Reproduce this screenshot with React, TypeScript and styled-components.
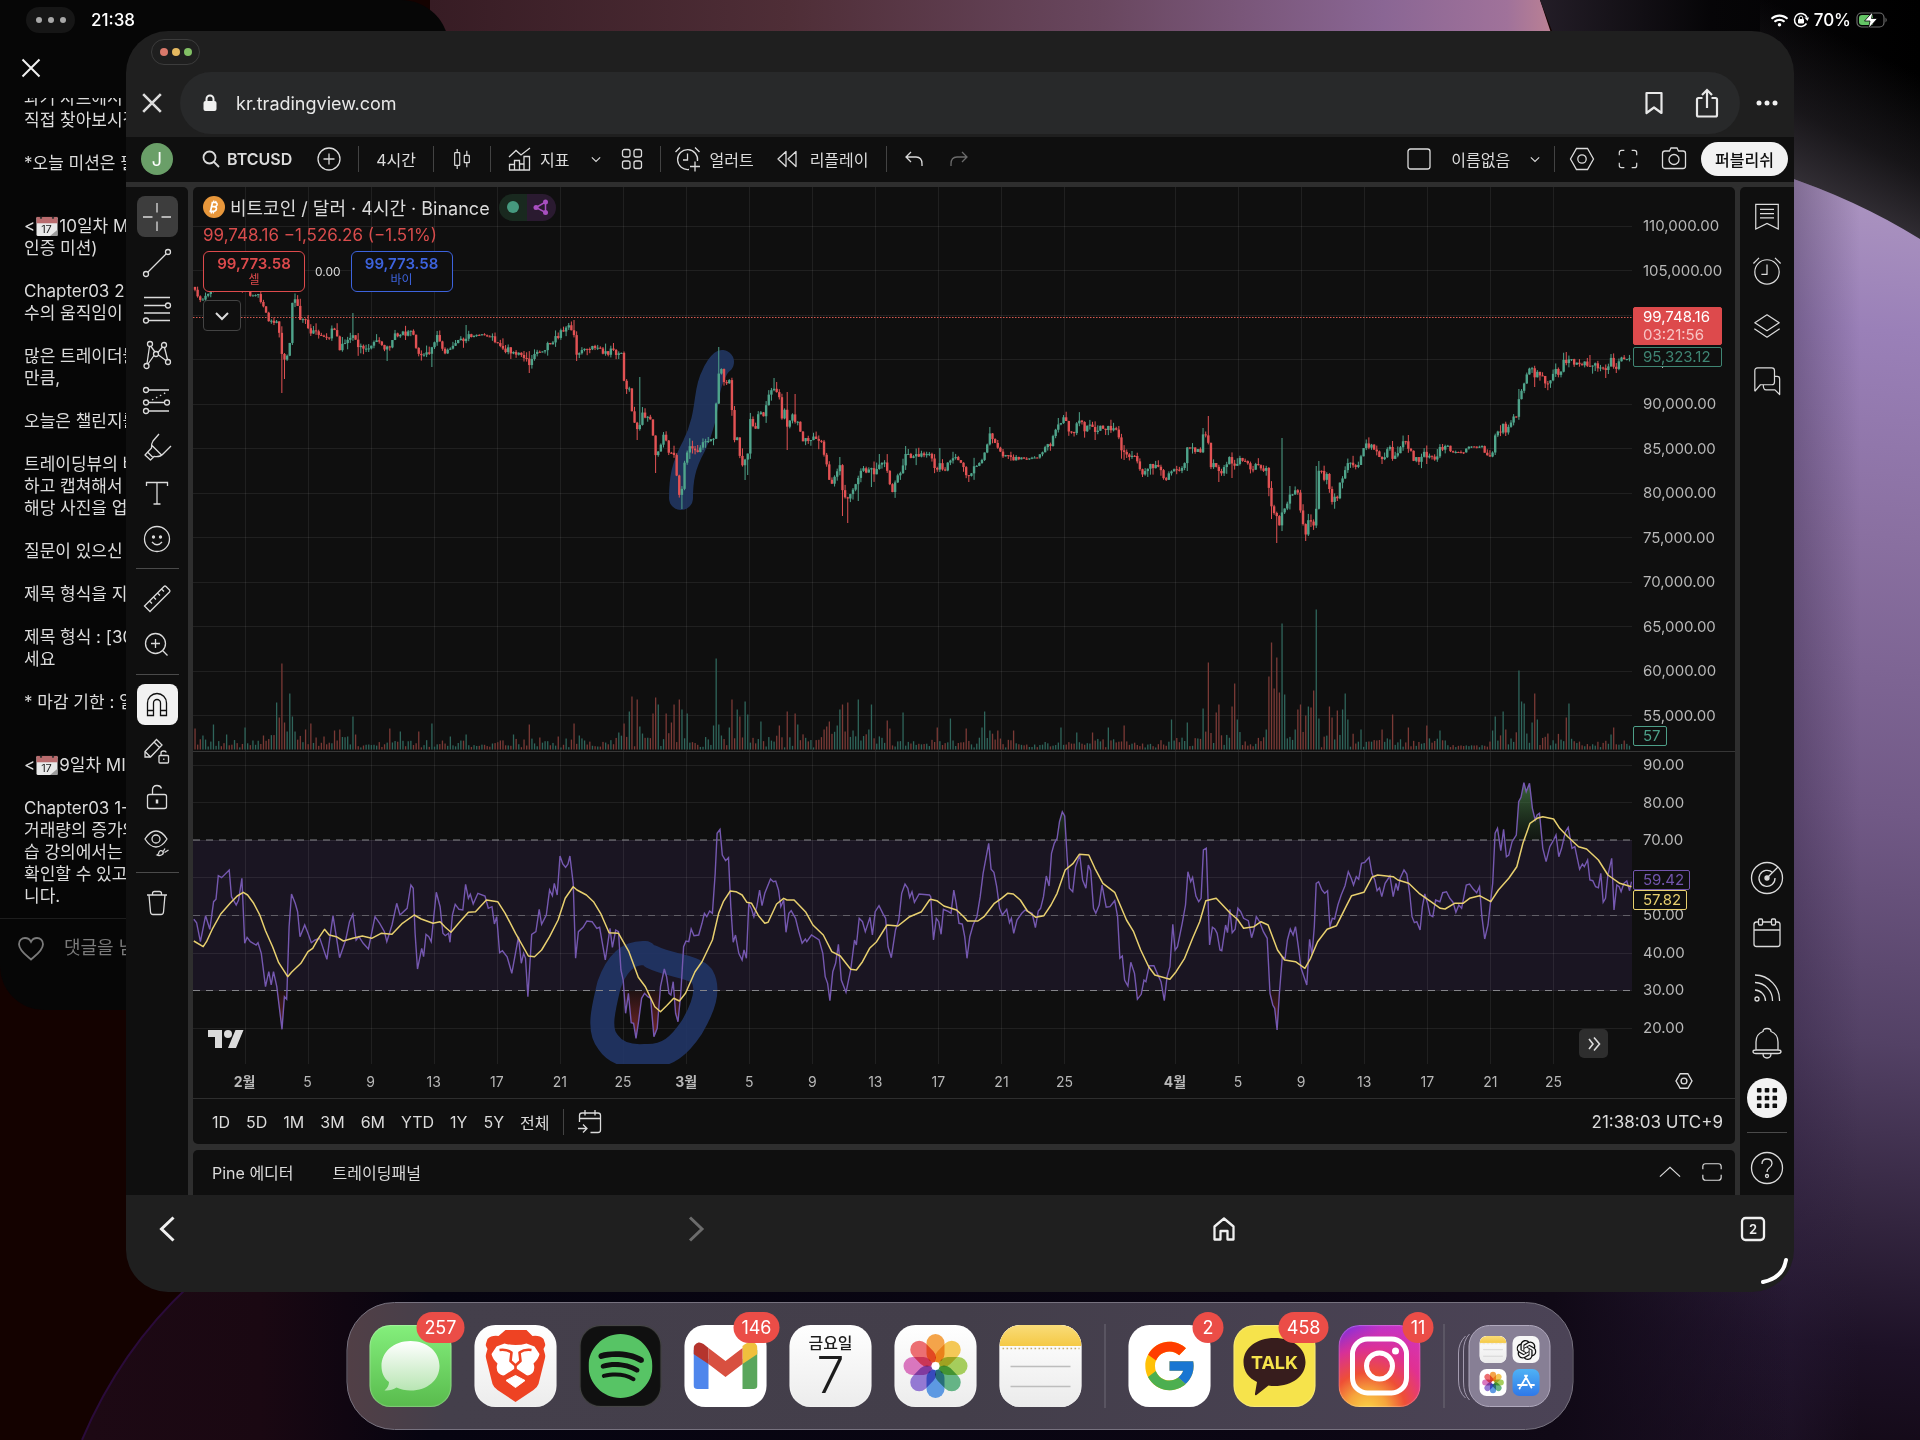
import React from "react";
import styled, { createGlobalStyle } from "styled-components";
import { SiSpotify, SiOpenai } from "react-icons/si";
import { FcGoogle } from "react-icons/fc";
import { FaWifi } from "react-icons/fa";

/* ------------------------------------------------------------------ */
/* Base                                                                */
/* ------------------------------------------------------------------ */

const GlobalStyle = createGlobalStyle`
  *, *::before, *::after { box-sizing: border-box; }
  body {
    margin: 0;
    background: #050308;
    color: #dbdbdb;
    font-family: Inter, "Noto Sans CJK KR", "Noto Sans", sans-serif;
    font-size: 16px;
  }
  button {
    margin: 0;
    padding: 0;
    border: 0;
    background: none;
    color: inherit;
    font: inherit;
    cursor: pointer;
  }
  p, h1, h2 { margin: 0; font-weight: 400; }
`;

const Desktop = styled.div`
  position: relative;
  height: 100vh;
  min-height: 1100px;
  overflow: hidden;
`;

const WallpaperSvg = styled.svg`
  position: absolute;
  inset: 0;
  width: 100%;
  height: 100%;
`;

const Glyph = styled.svg<{ $size?: number; $stroke?: number }>`
  display: block;
  flex: none;
  width: ${(p) => p.$size ?? 28}px;
  height: ${(p) => p.$size ?? 28}px;
  fill: none;
  stroke: currentColor;
  stroke-width: ${(p) => p.$stroke ?? 1.3};
  overflow: visible;
`;

const Wallpaper = () => (
  <WallpaperSvg viewBox="0 0 1920 1440" preserveAspectRatio="xMidYMid slice" aria-hidden="true">
    <defs>
      <linearGradient id="band" x1="430" x2="1552" y1="0" y2="0" gradientUnits="userSpaceOnUse">
        <stop offset="0" stopColor="#371c24" />
        <stop offset=".32" stopColor="#4f2e37" />
        <stop offset=".6" stopColor="#69475f" />
        <stop offset=".85" stopColor="#8a6694" />
        <stop offset=".96" stopColor="#a0729a" />
        <stop offset="1" stopColor="#bb8194" />
      </linearGradient>
      <linearGradient id="night" x1="1540" x2="1920" y1="0" y2="0" gradientUnits="userSpaceOnUse">
        <stop offset="0" stopColor="#231d27" />
        <stop offset=".45" stopColor="#060507" />
        <stop offset="1" stopColor="#000" />
      </linearGradient>
      <linearGradient id="glow" x1="1890" x2="1813" y1="60" y2="215" gradientUnits="userSpaceOnUse">
        <stop offset="0" stopColor="#3f3a42" stopOpacity="0" />
        <stop offset=".5" stopColor="#3f3a42" stopOpacity=".35" />
        <stop offset="1" stopColor="#3f3a42" stopOpacity=".95" />
      </linearGradient>
      <linearGradient id="lilac" x1="1900" x2="1780" y1="180" y2="1440" gradientUnits="userSpaceOnUse">
        <stop offset="0" stopColor="#ad96c1" />
        <stop offset=".12" stopColor="#9a80b8" />
        <stop offset=".28" stopColor="#8a70a1" />
        <stop offset=".5" stopColor="#715986" />
        <stop offset=".68" stopColor="#534165" />
        <stop offset=".82" stopColor="#33253f" />
        <stop offset=".92" stopColor="#1d1126" />
        <stop offset="1" stopColor="#140a18" />
      </linearGradient>
      <linearGradient id="edge" x1="1790" x2="1860" y1="0" y2="0" gradientUnits="userSpaceOnUse">
        <stop offset="0" stopColor="#2a1c3a" stopOpacity=".35" />
        <stop offset="1" stopColor="#2a1c3a" stopOpacity="0" />
      </linearGradient>
      <linearGradient id="floor" x1="90" x2="1792" y1="0" y2="0" gradientUnits="userSpaceOnUse">
        <stop offset="0" stopColor="#1d0914" />
        <stop offset=".1" stopColor="#1a0812" />
        <stop offset=".2" stopColor="#060410" />
        <stop offset=".7" stopColor="#0b0613" />
        <stop offset=".86" stopColor="#100916" />
        <stop offset="1" stopColor="#140a1a" stopOpacity="0" />
      </linearGradient>
    </defs>
    <rect width="1920" height="1440" fill="#140200" />
    <path d="M430 0H1540L1560 60H430Z" fill="url(#band)" />
    <path d="M1540 0H1920V260H1600L1552 31Z" fill="url(#night)" />
    <path d="M1760 0H1920V260H1760Z" fill="url(#glow)" />
    <path d="M1760 168Q1850 195 1920 239V1440H1400V1200H1760Z" fill="url(#lilac)" />
    <path d="M1400 168H1760Q1850 195 1920 239V1440H1400Z" fill="url(#edge)" />
    <path d="M82 1440Q120 1350 190 1285H1792V1440Z" fill="url(#floor)" />
    <path d="M82 1440Q120 1350 190 1285" fill="none" stroke="#2a0b3a" strokeWidth="2" />
  </WallpaperSvg>
);

/* ------------------------------------------------------------------ */
/* Status bar                                                          */
/* ------------------------------------------------------------------ */

const StatusBar = styled.header`
  position: absolute;
  z-index: 2;
  top: 0;
  left: 0;
  right: 0;
  display: flex;
  align-items: center;
  height: 40px;
  padding: 0 32px 0 26px;
  color: #fff;
  font-size: 17px;
  font-weight: 500;
`;

const DotsPill = styled.button<{ $outlined?: boolean }>`
  display: flex;
  align-items: center;
  justify-content: center;
  gap: ${(p) => (p.$outlined ? 4 : 6)}px;
  width: 49px;
  height: 26px;
  border-radius: 13px;
  background: ${(p) => (p.$outlined ? "transparent" : "#161616")};
  border: ${(p) => (p.$outlined ? "1px solid #3c3c3c" : "0")};
`;

const Dot = styled.span<{ $color: string; $small?: boolean }>`
  width: ${(p) => (p.$small ? 6 : 8)}px;
  height: ${(p) => (p.$small ? 6 : 8)}px;
  border-radius: 50%;
  background: ${(p) => p.$color};
`;

const Clock = styled.time`
  margin-left: 16px;
`;

const StatusIcons = styled.div`
  display: flex;
  align-items: center;
  gap: 5px;
  margin-left: auto;
`;

const Battery = () => (
  <svg width="32" height="18" viewBox="0 0 32 18" aria-label="배터리 충전 중">
    <rect x="1" y="2" width="27" height="14" rx="4.5" fill="none" stroke="#6d6d6d" strokeWidth="1.2" />
    <path d="M6 4H17V14H6Q3 14 3 11V7Q3 4 6 4Z" fill="#64c466" />
    <path d="M29.5 6.5Q32 9 29.5 11.5Z" fill="#6d6d6d" />
    <path d="M17 .5L8.500 10H14L12.500 17.500L21.500 7.500H15.500Z" fill="#fff" stroke="#000" strokeWidth=".8" />
  </svg>
);

/* ------------------------------------------------------------------ */
/* Notes-like app behind the browser                                   */
/* ------------------------------------------------------------------ */

const BackApp = styled.section`
  position: absolute;
  top: 0;
  left: 0;
  display: flex;
  flex-direction: column;
  width: 449px;
  height: 1010px;
  padding-top: 54px;
  border-radius: 0 48px 0 44px;
  background: #060606;
`;

const BackClose = styled.button`
  width: 28px;
  height: 28px;
  margin-left: 17px;
  color: #f0f0f0;
`;

const Article = styled.article`
  display: flex;
  flex: 1;
  flex-direction: column;
  justify-content: flex-end;
  gap: 21px;
  min-height: 0;
  margin-top: 16px;
  padding: 0 24px 11px;
  overflow: hidden;
  color: #dcdcdc;
  font-size: 17px;
  line-height: 22px;
  white-space: pre;
`;

const Block = styled.p<{ $far?: boolean }>`
  margin-top: ${(p) => (p.$far ? 20 : 0)}px;
`;

const CommentBar = styled.footer`
  display: flex;
  align-items: flex-start;
  gap: 19px;
  height: 92px;
  padding: 16px 17px;
  border-top: 1px solid #1d1d1d;
  color: #7a7a7a;
  font-size: 18px;
  line-height: 26px;
`;

const EmojiSvg = styled.svg`
  width: 22px;
  height: 20px;
  margin: 0 1px;
  vertical-align: -4px;
`;

const CalendarEmoji = () => (
  <EmojiSvg viewBox="0 0 22 22" preserveAspectRatio="none" aria-label="달력">
    <rect x=".5" y="1" width="21" height="21" rx="1.500" fill="#e9e9e9" />
    <path d="M.5 1H21.500V8H.5Z" fill="#b96c6e" />
    <circle cx="5" cy="2" r="1.200" fill="#333" />
    <circle cx="17" cy="2" r="1.200" fill="#333" />
    <path d="M21.500 15L14 22H21.500Z" fill="#9b9b9b" />
    <text x="10.500" y="19" fontSize="11" textAnchor="middle" fill="#222" fontFamily="Inter, sans-serif">17</text>
  </EmojiSvg>
);

const NotesApp = () => (
  <BackApp>
    <BackClose aria-label="닫기">
      <Glyph viewBox="0 0 28 28" $stroke={2}><path d="M5.500 5.500L22.500 22.500M22.500 5.500L5.500 22.500" /></Glyph>
    </BackClose>
    <Article>
      <Block>{"과거 차트에서\n직접 찾아보시길"}</Block>
      <Block>{"*오늘 미션은 필"}</Block>
      <Block $far>{"<"}<CalendarEmoji />{"10일차 M\n인증 미션)"}</Block>
      <Block>{"Chapter03 2\n수의 움직임이"}</Block>
      <Block>{"많은 트레이더들\n만큼,"}</Block>
      <Block>{"오늘은 챌린지를"}</Block>
      <Block>{"트레이딩뷰의 바\n하고 캡쳐해서\n해당 사진을 업"}</Block>
      <Block>{"질문이 있으신"}</Block>
      <Block>{"제목 형식을 지"}</Block>
      <Block>{"제목 형식 : [30\n세요"}</Block>
      <Block>{"* 마감 기한 : 일"}</Block>
      <Block $far>{"<"}<CalendarEmoji />{"9일차 MI"}</Block>
      <Block>{"Chapter03 1-\n거래량의 증가와\n습 강의에서는\n확인할 수 있고\n니다."}</Block>
    </Article>
    <CommentBar>
      <Glyph viewBox="0 0 28 28" $stroke={1.8}>
        <path d="M14 24.500C10 21 2 15.500 2 9.200C2 5.500 4.800 3 8 3C10.600 3 12.800 4.400 14 6.800C15.200 4.400 17.400 3 20 3C23.200 3 26 5.500 26 9.200C26 15.500 18 21 14 24.500Z" />
      </Glyph>
      <span>댓글을 남</span>
    </CommentBar>
  </BackApp>
);

/* ------------------------------------------------------------------ */
/* Browser window                                                      */
/* ------------------------------------------------------------------ */

const BrowserWindow = styled.main`
  position: absolute;
  z-index: 3;
  top: 31px;
  right: 126px;
  bottom: 148px;
  left: 126px;
  display: flex;
  flex-direction: column;
  overflow: hidden;
  border-radius: 42px;
  background: #1f1f1f;
`;

const TitleBar = styled.div`
  flex: none;
  height: 41px;
  padding: 8px 25px;
`;

const AddressRow = styled.div`
  display: flex;
  flex: none;
  align-items: center;
  gap: 15px;
  height: 65px;
  padding: 0 15px 3px 13px;
`;

const AddressBar = styled.div`
  display: flex;
  flex: 1;
  align-items: center;
  height: 62px;
  padding: 0 19px 0 20px;
  border-radius: 31px;
  background: #28292a;
  color: #e8e8e8;
  font-size: 18px;
`;

const Url = styled.a`
  margin: 0 auto 0 16px;
  color: inherit;
  text-decoration: none;
`;

const IconButton = styled.button<{ $ml?: number; $dim?: boolean }>`
  display: flex;
  flex: none;
  align-items: center;
  justify-content: center;
  margin-left: ${(p) => p.$ml ?? 0}px;
  color: ${(p) => (p.$dim ? "#6c6c6c" : "inherit")};
`;

const Toolbar = styled.div`
  display: flex;
  flex: none;
  align-items: center;
  height: 45px;
  padding: 0 6px 1px 15px;
  background: #0f0f0f;
  white-space: nowrap;
`;

const Avatar = styled.button`
  width: 32px;
  height: 32px;
  border-radius: 50%;
  background: #6a9f68;
  color: #fff;
  font-size: 18px;
`;

const ToolButton = styled.button<{ $ml: number; $gap?: number; $strong?: boolean }>`
  display: flex;
  flex: none;
  align-items: center;
  gap: ${(p) => p.$gap ?? 8}px;
  margin-left: ${(p) => p.$ml}px;
  font-weight: ${(p) => (p.$strong ? 600 : 400)};
`;

const Divider = styled.span<{ $tight?: boolean }>`
  flex: none;
  width: 1px;
  height: 26px;
  margin-left: ${(p) => (p.$tight ? 14 : 17)}px;
  background: #434343;
`;

const RightTools = styled.div`
  display: flex;
  align-items: center;
  margin-left: auto;
`;

const Publish = styled.button`
  height: 34px;
  margin-left: 14px;
  padding: 0 14px;
  border-radius: 17px;
  background: #f2f2f2;
  color: #0f0f0f;
  font-weight: 500;
`;

const Chevron = () => (
  <Glyph viewBox="0 0 12 12" $size={10}><path d="M1 4L6 9L11 4" /></Glyph>
);

const FullscreenGlyph = ({ wide }: { wide?: boolean }) => (
  <Glyph viewBox="0 0 24 24" $size={22}>
    {wide ? (
      <path d="M2 9V6Q2 3 5 3H19Q22 3 22 6V9M2 15V18Q2 21 5 21H19Q22 21 22 18V15" />
    ) : (
      <path d="M2.500 8V5Q2.500 2.500 5 2.500H8M16 2.500H19Q21.500 2.500 21.500 5V8M21.500 16V19Q21.500 21.500 19 21.500H16M8 21.500H5Q2.500 21.500 2.500 19V16" />
    )}
  </Glyph>
);

const HexGlyph = ({ size = 26 }: { size?: number }) => (
  <Glyph viewBox="0 0 26 26" $size={size} $stroke={size < 20 ? 2 : 1.3}>
    <path d="M7.500 2.500H18.500L24.500 13L18.500 23.500H7.500L1.500 13Z" />
    <circle cx="13" cy="13" r="4.200" />
  </Glyph>
);

const ChartToolbar = () => (
  <Toolbar>
    <Avatar>J</Avatar>
    <ToolButton $ml={29} $gap={7} $strong>
      <Glyph viewBox="0 0 18 18" $size={18} $stroke={1.8}><circle cx="7.500" cy="7.500" r="6" /><path d="M12 12L17 17" /></Glyph>
      BTCUSD
    </ToolButton>
    <ToolButton $ml={25} aria-label="비교 추가">
      <Glyph viewBox="0 0 24 24" $size={24}><circle cx="12" cy="12" r="11" /><path d="M12 6.500V17.500M6.500 12H17.500" /></Glyph>
    </ToolButton>
    <Divider />
    <ToolButton $ml={17}>4시간</ToolButton>
    <Divider />
    <ToolButton $ml={17} aria-label="캔들">
      <Glyph viewBox="0 0 22 24" $size={22}>
        <rect x="3" y="5" width="5.500" height="14" rx=".5" /><path d="M5.750 1V5M5.750 19V23" />
        <rect x="13.500" y="8" width="5.500" height="8" rx=".5" /><path d="M16.250 3V8M16.250 16V21" />
      </Glyph>
    </ToolButton>
    <Divider />
    <ToolButton $ml={17}>
      <Glyph viewBox="0 0 24 24" $size={24}>
        <path d="M1 10L8 3.500L13 8L22 1" />
        <path d="M1.500 23V17.500H6.500V23M6.500 23V13.500H11.500V23M11.500 23V17H16V23M16 23V9.500H21.500V23M1 23H22" />
      </Glyph>
      지표
    </ToolButton>
    <ToolButton $ml={22} aria-label="지표 메뉴"><Chevron /></ToolButton>
    <ToolButton $ml={20} aria-label="레이아웃 템플릿">
      <Glyph viewBox="0 0 22 22" $size={22}>
        <rect x="1.500" y="1.500" width="7.500" height="7.500" rx="2" /><rect x="13" y="1.500" width="7.500" height="7.500" rx="2" />
        <rect x="1.500" y="13" width="7.500" height="7.500" rx="2" /><rect x="13" y="13" width="7.500" height="7.500" rx="2" />
      </Glyph>
    </ToolButton>
    <Divider />
    <ToolButton $ml={14}>
      <Glyph viewBox="0 0 26 26" $size={26}>
        <path d="M22.500 15A10 10 0 1 0 14 23.500" /><path d="M12.500 7.500V14H8" /><path d="M.5 6L5 1.500M20 1.500L24.500 6" />
        <path d="M20 15.500V25.500M15 20.500H25" />
      </Glyph>
      얼러트
    </ToolButton>
    <ToolButton $ml={22} $gap={12}>
      <Glyph viewBox="0 0 22 22" $size={22}><path d="M10 3.500V18.500L2 11ZM20 3.500V18.500L12 11Z" strokeLinejoin="round" /></Glyph>
      리플레이
    </ToolButton>
    <Divider />
    <ToolButton $ml={17} aria-label="실행 취소">
      <Glyph viewBox="0 0 20 20" $size={20}><path d="M7 3L2 8L7 13M2 8H12Q18 8 18 15V17" /></Glyph>
    </ToolButton>
    <IconButton $ml={25} $dim aria-label="다시 실행">
      <Glyph viewBox="0 0 20 20" $size={20}><path d="M13 3L18 8L13 13M18 8H8Q2 8 2 15V17" /></Glyph>
    </IconButton>
    <RightTools>
      <IconButton aria-label="레이아웃">
        <Glyph viewBox="0 0 24 24" $size={24}><rect x="1" y="2" width="22" height="20" rx="2.500" /></Glyph>
      </IconButton>
      <ToolButton $ml={20}>이름없음</ToolButton>
      <ToolButton $ml={20} aria-label="레이아웃 메뉴"><Chevron /></ToolButton>
      <Divider $tight />
      <ToolButton $ml={14} aria-label="설정"><HexGlyph /></ToolButton>
      <ToolButton $ml={22} aria-label="전체화면"><FullscreenGlyph /></ToolButton>
      <ToolButton $ml={22} aria-label="스냅샷">
        <Glyph viewBox="0 0 26 26" $size={26}>
          <path d="M8.500 5L10 2H16L17.500 5H22Q24.500 5 24.500 7.500V20Q24.500 22.500 22 22.500H4Q1.500 22.500 1.500 20V7.500Q1.500 5 4 5Z" />
          <circle cx="13" cy="13.500" r="5" />
        </Glyph>
      </ToolButton>
      <Publish>퍼블리쉬</Publish>
    </RightTools>
  </Toolbar>
);

/* ------------------------------------------------------------------ */
/* Workspace                                                           */
/* ------------------------------------------------------------------ */

const Workspace = styled.div`
  display: grid;
  flex: 1;
  grid-template-columns: 62px minmax(0, 1fr) 54px;
  gap: 5px;
  min-height: 0;
  padding-top: 5px;
  background: #2e2e2e;
`;

const DrawTools = styled.nav`
  display: flex;
  flex-direction: column;
  align-items: center;
  gap: 5px;
  padding-top: 9px;
  border-radius: 0 5px 0 0;
  background: #0f0f0f;
`;

const DrawButton = styled.button<{ $look?: "active" | "pressed" }>`
  display: flex;
  flex: none;
  align-items: center;
  justify-content: center;
  width: 41px;
  height: 41px;
  border-radius: 8px;
  background: ${(p) => (p.$look === "active" ? "#3d3d3d" : p.$look === "pressed" ? "#f2f2f2" : "transparent")};
  color: ${(p) => (p.$look === "pressed" ? "#0f0f0f" : "#dbdbdb")};
`;

const RailRule = styled.hr<{ $width: number; $gap: number }>`
  flex: none;
  width: ${(p) => p.$width}px;
  height: 1px;
  margin: ${(p) => p.$gap}px 0;
  border: 0;
  background: #4a4a4a;
`;

type ToolSpec = { label: string; look?: "active" | "pressed"; art: React.ReactNode } | null;

const DRAW_TOOLS: ToolSpec[] = [
  { label: "십자선", look: "active", art: <path d="M14 0V9.500M14 18.500V28M0 14H9.500M18.500 14H28" /> },
  { label: "추세선", art: <><circle cx="3" cy="25" r="2.500" /><circle cx="25" cy="3" r="2.500" /><path d="M5 23L23 5" /></> },
  {
    label: "되돌림",
    art: <><path d="M1 2.500H27M1 10.500H22.500M1 18H27M5.500 25.500H27" /><circle cx="25" cy="10.500" r="2.500" /><circle cx="3" cy="25.500" r="2.500" /></>,
  },
  {
    label: "패턴",
    art: <><circle cx="7" cy="3" r="2.500" /><circle cx="21" cy="4" r="2.500" /><circle cx="13" cy="13" r="2.500" /><circle cx="3.500" cy="25" r="2.500" /><circle cx="25" cy="21" r="2.500" /><path d="M6.500 5.500L4 22.500M8 5.500L12 11M15 11.500L19.500 6M21.500 6.500L24.500 18.500M11 14.500L5 23M15.500 14L23 19.500" /></>,
  },
  {
    label: "예측",
    art: <><circle cx="3" cy="3" r="2.500" /><circle cx="3" cy="15.500" r="2.500" /><circle cx="24" cy="15.500" r="2.500" /><circle cx="3" cy="24" r="2.500" /><path d="M5.500 3H26M5.500 15.500H21.500M5.500 24H26" /><path d="M9 13L24 5" strokeDasharray="1.500 3" /></>,
  },
  {
    label: "브러시",
    art: <path d="M16 1L10 8Q8 11 8.500 15L2 22L7.500 27L11 23.500Q17 24.500 20 21L28 13M9 12.500L18.500 22M5 19.500L10.500 25" strokeLinejoin="round" />,
  },
  { label: "텍스트", art: <path d="M3.500 7V3.500H24.500V7M14 3.500V25M10.500 25H17.500" /> },
  {
    label: "아이콘",
    art: <><circle cx="14" cy="14" r="12.500" /><path d="M9 17Q14 22.500 19 17" /><circle cx="10.500" cy="12" r="1" fill="currentColor" /><circle cx="17.500" cy="12" r="1" fill="currentColor" /></>,
  },
  null,
  {
    label: "측정",
    art: <path d="M1.500 21L21 1.500Q22 .5 23 1.500L26.500 5Q27.500 6 26.500 7L7 26.500ZM1.500 21L7 26.500M6.500 16L9 18.500M10.500 12L13 14.500M14.500 8L17 10.500M18.500 4L21 6.500" />,
  },
  { label: "확대", art: <><circle cx="12.500" cy="12.500" r="10" /><path d="M19.800 19.800L24.500 24.500M12.500 8V17M8 12.500H17" /></> },
  null,
  {
    label: "자석",
    look: "pressed",
    art: <path d="M4.500 24.500V12A9.500 9.500 0 0 1 23.500 12V24.500H17.500V12A3.500 3.500 0 0 0 10.500 12V24.500ZM4.500 19.500H10.500M17.500 19.500H23.500" />,
  },
  {
    label: "드로잉 유지",
    art: <><path d="M2 20V14.500L13.500 2.500L19 8L7.500 20ZM11 5L16.500 10.500M2 14.500L7.500 20" /><rect x="16" y="18.500" width="9.500" height="7.500" rx="1" /><path d="M18 18.500V16Q18 14 20.500 14Q23 14 23 15.500" /><path d="M20.800 21.500V23" /></>,
  },
  {
    label: "잠금",
    art: <><rect x="4.500" y="11.500" width="19" height="14" rx="2" /><path d="M9.500 11.500V7Q9.500 2.500 14 2.500Q17.500 2.500 18.500 5.500" /><path d="M14 16.500V20.500" strokeWidth="2.500" /></>,
  },
  {
    label: "숨기기",
    art: <><path d="M2 10Q7 2 13 2Q19 2 24 10Q19 18 13 18Q7 18 2 10Z" /><circle cx="13" cy="10" r="4" /><path d="M14 26Q16 25 16 23Q17.500 20.500 20 22.500Q21 25 18.500 26Q16 27 14 26ZM20.500 22L22 19.500M21.500 23.500L25.500 21" /></>,
  },
  null,
  { label: "삭제", art: <path d="M4 6H24M9.500 6V4.500Q9.500 2.500 11.500 2.500H16.500Q18.500 2.500 18.500 4.500V6M6 6L7.500 23Q7.700 25.500 10 25.500H18Q20.300 25.500 20.500 23L22 6" /> },
];

const SideRail = styled.nav`
  display: flex;
  flex-direction: column;
  align-items: center;
  padding-top: 1px;
  border-radius: 5px 0 0 0;
  background: #0f0f0f;
`;

const RailButton = styled.button<{ $push?: boolean }>`
  display: flex;
  flex: none;
  align-items: center;
  justify-content: center;
  width: 54px;
  height: 55px;
  margin-top: ${(p) => (p.$push ? "auto" : "0")};
`;

const AppsDot = styled.span`
  display: flex;
  align-items: center;
  justify-content: center;
  width: 40px;
  height: 40px;
  border-radius: 50%;
  background: #f2f2f2;
  color: #0f0f0f;
`;

const AppsGrid = () => (
  <AppsDot>
    <svg width="22" height="22" viewBox="0 0 24 24" fill="currentColor">
      {[1, 9.5, 18].map((x) => [1, 9.5, 18].map((y) => <rect key={`${x}-${y}`} x={x} y={y} width="5" height="5" rx="1" />))}
    </svg>
  </AppsDot>
);

const RAIL_TOP = [
  { label: "왓치리스트", art: <><path d="M4 3.500H28V30L16 24L4 30Z" /><path d="M8.500 9H23.500M8.500 13.500H23.500M8.500 18H23.500" /></> },
  { label: "얼러트", art: <><circle cx="16" cy="17" r="13" /><path d="M16 9V19.500H10M1.500 8L7.500 2M24.500 2L30.500 8" /></> },
  { label: "오브젝트 트리", art: <path d="M16 4L29 12.500L16 21L3 12.500ZM2.500 19L16 28L29.500 19" strokeLinejoin="round" /> },
  { label: "채팅", art: <path d="M3 27V5Q3 2 6 2H21Q24 2 24 5V17Q24 20 21 20H9L3 27M24 11H27Q29.500 11 29.500 14V30.500L24.500 25.500H15Q12 25.500 12 20" strokeLinejoin="round" /> },
];

const RAIL_BOTTOM = [
  { label: "스크리너", art: <><circle cx="16" cy="16" r="15.500" /><path d="M21.500 10.500A8 8 0 1 0 24 16" /><path d="M16 16L27 5" /><circle cx="16" cy="16" r="2" fill="currentColor" /></> },
  { label: "캘린더", art: <><path d="M7.500 5H5.500Q3 5 3 7.500V27Q3 29.500 5.500 29.500H26.500Q29 29.500 29 27V7.500Q29 5 26.500 5H24.500M11.500 5H20.500M3 13H29" /><rect x="7.500" y="2" width="4" height="6" rx="1" /><rect x="20.500" y="2" width="4" height="6" rx="1" /></> },
  { label: "뉴스", art: <><circle cx="6" cy="27" r="2" /><path d="M4 3A25 25 0 0 1 28.500 29M4 10.500A18 18 0 0 1 21.500 29M4 18A11 11 0 0 1 14.500 29" /></> },
  { label: "알림", art: <><path d="M5 26.500Q2 26.500 2 24.500Q2 23 5 23V15Q5 7 12 4.500Q12 1.500 16 1.500Q20 1.500 20 4.500Q27 7 27 15V23Q30 23 30 24.500Q30 26.500 27 26.500ZM5 23H27M12 26.500Q12 31 16 31Q20 31 20 26.500" /></> },
];

/* ------------------------------------------------------------------ */
/* Chart data                                                          */
/* ------------------------------------------------------------------ */

const PLOT_RIGHT = 1632;
const BAR = 2.632;

/* Closing path of the price series: plot x, plot y. */
const CLOSES = `193,287 200,303 204,297 210,293 216,270 226,268 236,280 245,292 259,295 265,310 267,317 278,325 282,358
289,355 292,308 294,295 299,312 301,323 306,320 311,333 320,333 328,338 335,327 340,350 347,340 352,333 356,343 367,348
378,339 388,350 394,337 412,330 416,345 420,358 431,353 437,335 443,350 451,351 455,342 465,337 482,335 494,338 504,348
516,353 524,355 529,367 534,354 545,348 557,338 560,330 573,328 577,357 582,348 596,347 607,355 612,350 620,355 622,357
625,390 630,385 631,410 637,428 641,423 642,415 651,417 655,460 661,443 664,433 669,453 675,453 678,490 681,503 684,463
686,453 692,447 698,452 704,438 714,438 718,372 720,367 725,382 731,382 733,443 738,440 741,465 745,460 747,467 750,420
755,432 760,407 763,418 769,392 778,392 782,417 784,407 787,430 792,413 800,428 803,438 820,438 827,463 831,487 840,463
843,497 847,503 852,490 857,480 861,467 867,475 871,467 873,478 880,460 887,468 892,492 896,480 902,470 905,452 912,457
926,455 933,455 935,472 939,463 943,472 949,462 955,453 961,463 968,480 973,468 984,457 989,433 994,442 1002,455
1016,458 1037,458 1045,450 1051,443 1057,430 1064,418 1071,435 1080,422 1086,430 1091,422 1096,435 1102,427 1116,430
1120,445 1127,458 1137,458 1138,473 1147,470 1152,465 1158,468 1165,478 1172,472 1173,463 1176,472 1185,462 1188,447
1200,453 1204,433 1208,432 1209,470 1215,462 1221,475 1226,465 1230,458 1233,468 1237,465 1240,458 1248,462 1252,470
1257,463 1267,470 1269,493 1273,512 1277,513 1278,535 1280,523 1283,510 1285,510 1288,502 1291,493 1298,493 1302,522
1306,537 1309,515 1312,527 1316,517 1317,473 1320,470 1324,477 1329,477 1330,505 1337,497 1339,485 1343,475 1349,458
1355,467 1360,460 1362,447 1370,445 1375,453 1382,458 1387,452 1391,448 1393,458 1403,443 1408,445 1412,457 1420,462
1425,450 1428,457 1435,457 1440,450 1447,448 1453,452 1462,453 1468,447 1482,447 1486,456 1493,451 1496,428 1501,430
1503,422 1506,430 1510,425 1513,418 1518,417 1519,397 1523,392 1525,375 1531,367 1534,375 1540,372 1543,380 1548,383
1552,375 1557,370 1560,373 1563,363 1568,358 1573,362 1580,366 1588,363 1598,368 1602,365 1605,369 1612,357 1614,370
1620,360 1625,362 1632,359`;

/* Long wicks: plot x, wick end y. */
const WICKS = `282,393 285,379 352,313 388,361 431,367 465,325 529,373 573,320 577,361 614,343 636,440 641,377 655,473 682,509
718,347 745,480 747,475 773,378 787,450 786,392 794,394 840,457 843,516 847,523 857,501 872,487 880,454 905,446 939,448
968,482 989,427 1064,415 1096,440 1209,416 1204,428 1143,477 1165,481 1219,482 1232,478 1188,471 1277,543 1272,519
1283,438 1291,486 1306,541 1317,466 1319,461 1369,438 1393,441 1383,464 1408,435 1420,465 1427,464 1506,436 1519,389
1534,387 1548,389 1567,352 1590,355 1605,378 1612,354 1616,373`;

/* Volume spikes: plot x, bar height. */
const SPIKES = `195,21 203,14 213,25 226,15 245,22 263,14 276,47 279,32 282,86 284,27 289,56 292,33 296,18 305,20 310,26 324,13
335,19 340,20 352,33 356,15 389,21 400,18 418,18 431,26 449,13 465,15 499,9 514,15 528,25 540,12 557,13 574,26 579,14
620,17 625,26 630,38 633,53 636,50 638,37 641,23 652,36 655,52 657,45 667,36 672,27 675,45 678,50 681,40 683,43 686,36 714,24
717,91 720,25 728,22 731,50 733,65 736,40 739,33 746,48 749,35 762,28 778,24 780,23 786,38 794,36 796,33 799,25 824,20 827,23
830,28 838,24 841,40 843,45 846,18 849,47 854,19 857,50 859,33 870,20 872,45 888,29 891,21 904,37 938,22 951,31 967,21 983,22
985,38 991,19 998,19 1014,19 1061,22 1077,17 1093,17 1108,22 1124,24 1172,30 1188,27 1204,41 1209,87 1217,37 1219,45
1232,43 1235,66 1238,30 1266,20 1269,73 1272,107 1274,61 1277,92 1280,57 1282,126 1285,55 1295,20 1298,40 1301,45 1306,34
1309,43 1311,42 1314,59 1316,140 1319,31 1329,43 1332,32 1337,39 1343,40 1345,56 1348,30 1361,20 1383,20 1393,35 1408,22
1427,24 1440,19 1492,19 1495,33 1503,38 1506,20 1518,79 1521,48 1524,46 1532,27 1535,56 1537,30 1548,16 1566,32 1569,46
1612,15 1614,22`;

/* Oscillator samples of the two half-plots, on a finer grid than the plot. */
const RSI_A = `8,538 14,548 22,605 33,527 42,568 50,485 55,478 60,407 67,413 83,390 88,470 98,495 103,480 110,415 116,610
121,592 128,605 140,615 144,608 151,640 160,740 167,695 172,735 177,695 184,740 195,868 200,770 205,778 210,560 215,462
223,490 228,515 233,590 243,555 250,580 257,608 265,600 275,595 290,658 303,527 317,653 330,600 338,545 345,523 352,600
358,590 367,610 378,627 392,530 402,550 412,575 417,605 428,555 438,490 445,525 460,505 468,435 473,445 477,580 482,687
491,625 495,650 500,583 506,590 511,605 522,457 530,500 536,580 541,587 548,580 551,607 556,525 562,493 570,508 578,510
584,433 590,475 594,463 600,492 610,460 625,468 632,505 640,500 645,552 650,530 656,638 662,632 672,650 682,700 696,590
702,670 707,640 711,655 716,770 724,583 733,575 740,508 745,553 755,525 762,450 768,467 772,430 778,465 784,348 790,372
796,382 801,372 805,348 812,430 817,655 823,575 833,562 841,543 852,545 862,565 868,562 880,660 890,565 895,622 902,570
908,575 913,690 918,720 923,820 929,760 935,848 940,850 945,895 950,850 957,775 963,760 970,770 976,775 983,890 990,865
997,740 1005,687 1010,710 1015,760 1019,765 1024,725 1029,820 1034,845 1040,760 1046,620 1051,603 1057,605 1062,567
1068,587 1078,585 1085,550 1090,520 1095,530 1101,513 1107,520 1113,400 1117,280 1123,268 1128,345 1135,362 1141,353
1146,500 1151,607 1156,585 1163,640 1170,660 1174,630 1179,655 1184,490 1190,508 1195,530 1201,500 1207,450 1212,497
1218,460 1230,417 1236,425 1241,423 1247,450 1252,500 1258,480 1263,577 1269,520 1274,512 1283,535 1290,575 1297,610
1304,597 1307,605 1317,585 1333,600 1341,640 1346,710 1351,730 1356,782 1362,695 1368,670 1374,613 1380,720 1390,757
1400,690 1408,600 1412,615 1418,535 1425,545 1431,575 1441,532 1446,585 1452,515 1460,497 1468,520 1474,535 1479,620
1486,653 1495,570 1502,540 1508,460 1515,432 1521,445 1525,472 1530,455 1535,487 1545,462 1567,465`;
const RSI_B = `65,470 71,600 77,535 82,545 87,583 92,508 103,515 108,520 114,450 119,490 125,550 132,552 137,590 142,655
148,590 155,555 163,530 170,470 176,400 188,310 193,388 199,397 205,440 211,505 217,525 226,508 232,548 236,535 241,580
248,540 258,520 265,510 280,520 287,563 293,513 298,505 304,470 310,408 316,438 321,340 327,310 333,295 338,245 344,215
349,228 354,350 359,445 366,455 372,380 381,345 387,420 394,445 399,375 404,392 410,505 415,520 422,495 428,435 437,502
445,500 455,482 461,530 466,655 471,648 476,720 483,738 489,667 497,700 503,778 511,763 517,720 521,725 528,677 538,677
545,700 553,725 560,782 566,710 572,680 578,553 583,630 588,620 598,550 605,495 610,395 616,425 620,412 627,468 633,485
638,475 643,330 649,325 656,615 662,562 667,567 672,580 678,630 682,632 690,555 694,578 699,508 704,578 710,568 716,505
722,515 728,535 738,542 745,593 750,570 755,530 762,545 770,575 778,595 784,760 790,795 794,805 799,870 804,760 810,650
816,655 821,600 827,567 833,585 838,560 844,620 850,685 856,710 862,735 868,598 873,645 878,560 882,430 887,425 894,450
900,460 906,452 911,560 916,535 921,537 928,495 935,465 943,437 950,395 956,415 961,435 967,410 972,418 978,370 985,367
994,352 1000,400 1006,420 1011,452 1016,443 1021,470 1028,430 1038,408 1045,470 1051,430 1055,452 1060,415 1068,390
1074,402 1080,460 1085,530 1090,548 1095,545 1102,570 1107,500 1112,462 1118,490 1123,525 1129,530 1135,480 1144,485
1150,458 1158,455 1165,475 1172,487 1178,517 1184,495 1190,505 1200,435 1207,432 1215,448 1222,458 1228,440 1233,530
1239,597 1246,555 1251,490 1256,430 1261,280 1266,265 1273,332 1279,268 1285,350 1290,345 1297,305 1306,285 1311,185
1316,172 1322,128 1327,155 1334,130 1340,205 1346,240 1350,225 1355,220 1362,325 1369,365 1377,320 1385,300 1390,285
1396,350 1402,325 1410,275 1416,262 1424,325 1430,320 1440,388 1446,372 1450,380 1457,360 1462,420 1468,422 1474,440
1480,443 1485,400 1490,487 1495,475 1500,405 1508,355 1513,510 1519,435 1524,440 1528,455 1534,430 1540,423 1546,452
1550,425`;
const MA_A = `8,603 28,620 35,605 48,565 65,522 85,490 100,468 113,457 122,465 135,490 148,525 160,572 175,620 188,668
207,710 215,697 235,670 250,635 260,625 272,595 285,568 295,585 310,590 325,603 345,595 365,588 385,595 405,580 428,583
450,550 475,525 490,537 515,550 530,545 540,560 553,577 570,548 590,517 605,515 628,480 652,485 668,520 690,580 717,648
730,650 745,630 762,590 780,540 795,475 812,440 820,450 840,465 855,485 870,520 888,578 908,580 930,635 950,712 965,740
985,800 997,815 1010,797 1025,775 1037,783 1050,760 1070,695 1085,665 1095,635 1107,600 1120,520 1130,485 1145,453
1157,455 1170,465 1180,487 1190,490 1205,528 1218,550 1225,547 1243,492 1258,475 1265,480 1280,480 1305,517 1320,555
1342,585 1360,635 1378,648 1400,688 1412,690 1425,665 1440,625 1455,605 1477,555 1500,558 1525,530 1550,515 1567,480`;
const MA_B = `65,478 78,482 93,498 120,510 135,530 143,543 165,543 178,530 200,490 215,475 228,460 240,462 255,480
270,513 288,532 305,527 320,495 333,460 350,390 367,370 380,343 400,345 413,385 430,430 455,457 480,540 495,575 510,630
527,680 540,705 572,718 585,695 603,655 620,595 635,545 648,482 670,475 680,490 700,520 715,538 728,565 750,560 765,545
780,555 800,630 815,660 838,665 858,685 870,655 885,605 905,568 925,557 945,500 957,467 983,457 1000,412 1012,405
1045,410 1055,420 1078,430 1100,460 1125,485 1145,505 1155,507 1175,490 1193,490 1207,475 1228,467 1252,485 1268,450
1290,415 1307,380 1320,310 1335,250 1350,235 1362,230 1385,237 1398,265 1415,290 1438,320 1455,327 1480,360 1500,405
1525,430 1550,440`;

type Pt = [number, number];
const parse = (text: string): Pt[] => text.trim().split(/\s+/).map((s) => s.split(",").map(Number) as Pt);
const scaled = (text: string, x0: number): Pt[] => parse(text).map(([x, y]) => [x0 + x / 2.119, 740 + y / 3]);
const toPath = (pts: Pt[]) => pts.map(([x, y], i) => `${i ? "L" : "M"}${x.toFixed(1)} ${y.toFixed(1)}`).join("");

const rsi = [...scaled(RSI_A, 190), ...scaled(RSI_B, 900)];
const ma = [...scaled(MA_A, 190), ...scaled(MA_B, 900)];

const random = (seed: number) => () => {
  seed = (seed * 1664525 + 1013904223) % 4294967296;
  return seed / 4294967296;
};

const lookup = (pts: Pt[], x: number) => {
  const i = pts.findIndex((p) => p[0] >= x);
  if (i <= 0) return pts[i === 0 ? 0 : pts.length - 1][1];
  const [x1, y1] = pts[i - 1];
  const [x2, y2] = pts[i];
  return y1 + ((y2 - y1) * (x - x1)) / (x2 - x1);
};

const buildBars = () => {
  const rnd = random(21);
  const closes = parse(CLOSES);
  const wicks = parse(WICKS);
  const spikes = parse(SPIKES);
  const bars = [];
  let open = closes[0][1];
  for (let x = 245 - 19 * BAR; x < PLOT_RIGHT; x += BAR) {
    const calm = (x > 470 && x < 492) || (x > 1020 && x < 1040) || (x > 1450 && x < 1486);
    const close = lookup(closes, x) + (rnd() - 0.5) * (calm ? 2 : 7);
    const reach = calm ? 2 : 9;
    let top = Math.min(open, close) - rnd() * rnd() * reach;
    let bottom = Math.max(open, close) + rnd() * rnd() * reach;
    wicks.forEach(([wx, wy]) => {
      if (Math.abs(wx - x) <= BAR / 2) {
        top = Math.min(top, wy);
        bottom = Math.max(bottom, wy);
      }
    });
    const spike = spikes.find(([sx]) => Math.abs(sx - x) <= BAR / 2);
    const near = spikes.filter(([sx]) => Math.abs(sx - x) < 12).reduce((s, p) => s + p[1], 0);
    const volume = spike ? spike[1] : 2 + rnd() * (calm ? 3 : 6 + Math.min(near, 120) / 12);
    bars.push({ x, open, close, top, bottom, volume, up: close <= open });
    open = close;
  }
  return bars;
};
const bars = buildBars();

const GRID_X = [245, 308, 371, 434, 497, 560, 623, 686, 749, 812, 875, 938, 1001, 1064, 1175, 1238, 1301, 1364, 1427, 1490, 1553];
const PRICES = ["110,000.00", "105,000.00", "100,000.00", "95,000.00", "90,000.00", "85,000.00", "80,000.00", "75,000.00", "70,000.00", "65,000.00", "60,000.00", "55,000.00"];
const LEVELS = ["90.00", "80.00", "70.00", "60.00", "50.00", "40.00", "30.00", "20.00"];
const DATES = ["2월", "5", "9", "13", "17", "21", "25", "3월", "5", "9", "13", "17", "21", "25", "", "4월", "5", "9", "13", "17", "21", "25"];
const RANGES = ["1D", "5D", "1M", "3M", "6M", "YTD", "1Y", "5Y", "전체"];

/* ------------------------------------------------------------------ */
/* Chart                                                               */
/* ------------------------------------------------------------------ */

const Center = styled.div`
  display: flex;
  flex-direction: column;
  gap: 6px;
  min-width: 0;
  min-height: 0;
`;

const ChartCard = styled.section`
  display: flex;
  flex: 1;
  flex-direction: column;
  min-height: 0;
  border-radius: 5px;
  background: #0f0f0f;
  overflow: hidden;
`;

const ChartGrid = styled.div`
  position: relative;
  display: grid;
  flex: 1;
  grid-template-columns: minmax(0, 1fr) 103px;
  grid-template-rows: minmax(0, 564fr) minmax(0, 313fr) 34px;
  min-height: 0;
`;

const PlotSvg = styled.svg`
  grid-row: 1 / 3;
  grid-column: 1;
  display: block;
  width: 100%;
  height: 100%;
  min-height: 0;
`;

const Axis = styled.div<{ $pane: "price" | "level" }>`
  position: relative;
  display: flex;
  flex-direction: column;
  grid-column: 2;
  grid-row: ${(p) => (p.$pane === "price" ? 1 : 2)};
  justify-content: space-between;
  padding: ${(p) => (p.$pane === "price" ? "30px 0 26px 11px" : "4px 0 27px 11px")};
  border-top: ${(p) => (p.$pane === "price" ? "0" : "1px solid #363636")};
  color: #b8b8b8;
  font-size: 15px;
  line-height: 18px;
`;

const Tag = styled.span<{ $top: number; $color: string; $solid?: boolean; $wide?: boolean }>`
  position: absolute;
  top: ${(p) => p.$top}px;
  left: 1px;
  display: flex;
  flex-direction: column;
  min-width: ${(p) => (p.$wide ? 89 : 0)}px;
  padding: 0 5px 0 9px;
  border: 1px solid ${(p) => p.$color};
  border-radius: 2px;
  background: ${(p) => (p.$solid ? p.$color : "#0f0f0f")};
  color: ${(p) => (p.$solid ? "#fff" : p.$color)};
`;

const Countdown = styled.small`
  color: #f7c4c4;
  font-size: 15px;
`;

const TimeAxis = styled.div`
  display: flex;
  grid-column: 1;
  align-items: center;
  padding: 0 47px 0 20px;
  color: #b8b8b8;
  font-size: 14px;
`;

const DateCell = styled.span<{ $days: number; $strong?: boolean }>`
  flex: ${(p) => p.$days} 1 0;
  min-width: 0;
  text-align: center;
  font-weight: ${(p) => (p.$strong ? 700 : 400)};
`;

const AxisSettings = styled.button`
  display: flex;
  align-items: center;
  justify-content: center;
`;

const Legend = styled.div`
  position: absolute;
  top: 6px;
  left: 10px;
  display: flex;
  flex-direction: column;
  align-items: flex-start;
`;

const LegendTitle = styled.div`
  display: flex;
  align-items: center;
  gap: 5px;
  height: 28px;
`;

const SymbolName = styled.h1`
  font-size: 18px;
  white-space: nowrap;
`;

const MarketPill = styled.span`
  display: flex;
  width: 57px;
  height: 27px;
  margin-left: 4px;
  border-radius: 14px;
  overflow: hidden;
`;

const PillHalf = styled.span<{ $bg: string }>`
  display: flex;
  flex: 1;
  align-items: center;
  justify-content: center;
  background: ${(p) => p.$bg};
`;

const MarketDot = styled.span`
  width: 12px;
  height: 12px;
  border-radius: 50%;
  background: #46997f;
`;

const Change = styled.p`
  margin: 3px 0 5px;
  color: #d84c4c;
  font-size: 17px;
  line-height: 22px;
`;

const OrderRow = styled.div`
  display: flex;
  align-items: center;
  gap: 10px;
  font-size: 12px;
`;

const OrderButton = styled.button<{ $color: string }>`
  display: flex;
  flex-direction: column;
  align-items: center;
  justify-content: center;
  width: 102px;
  height: 41px;
  border: 1px solid ${(p) => p.$color};
  border-radius: 6px;
  background: #0f0f0f;
  color: ${(p) => p.$color};
  font-size: 12px;
  line-height: 16px;
`;

const OrderPrice = styled.strong`
  font-size: 15px;
  font-weight: 600;
`;

const Collapse = styled.button`
  display: flex;
  align-items: center;
  justify-content: center;
  width: 38px;
  height: 31px;
  margin-top: 8px;
  border: 1px solid #434343;
  border-radius: 4px;
  background: #0f0f0f;
`;

const BrandMark = styled.a`
  position: absolute;
  left: 15px;
  bottom: 46px;
  color: #dbdbdb;
`;

const ScrollEnd = styled.button`
  position: absolute;
  right: 127px;
  bottom: 40px;
  display: flex;
  align-items: center;
  justify-content: center;
  width: 29px;
  height: 29px;
  border-radius: 5px;
  background: #2e2e2e;
`;

const RangeBar = styled.div`
  display: flex;
  flex: none;
  align-items: center;
  gap: 16px;
  height: 46px;
  padding: 0 12px 0 19px;
  border-top: 1px solid #2e2e2e;
`;

const RangeRule = styled.span`
  width: 1px;
  height: 26px;
  margin-right: -3px;
  margin-left: -3px;
  background: #434343;
`;

const ZoneTime = styled.button`
  margin-left: auto;
  font-size: 17px;
`;

const PanelBar = styled.section`
  display: flex;
  flex: none;
  align-items: center;
  gap: 20px;
  height: 45px;
  padding: 0 12px 2px 19px;
  border-radius: 5px 5px 0 0;
  background: #0f0f0f;
`;

const PanelTab = styled.button`
  margin-right: 19px;
`;

const PanelActions = styled.div`
  display: flex;
  gap: 20px;
  align-items: center;
  margin-left: auto;
`;

const UP = "#4fa48b";
const DOWN = "#e25254";

const Plot = () => (
  <PlotSvg viewBox="193 187 1439 877" preserveAspectRatio="none" role="img" aria-label="BTCUSD 4시간 차트">
    <defs>
      <linearGradient id="hot" x1="0" x2="0" y1="780" y2="840" gradientUnits="userSpaceOnUse">
        <stop offset="0" stopColor="#4f8a50" stopOpacity=".75" />
        <stop offset="1" stopColor="#2e5a2e" stopOpacity=".1" />
      </linearGradient>
      <linearGradient id="cold" x1="0" x2="0" y1="990" y2="1040" gradientUnits="userSpaceOnUse">
        <stop offset="0" stopColor="#a02c2c" stopOpacity=".1" />
        <stop offset="1" stopColor="#a03034" stopOpacity=".75" />
      </linearGradient>
      <clipPath id="above"><rect x="193" y="751" width="1439" height="89" /></clipPath>
      <clipPath id="below"><rect x="193" y="991" width="1439" height="73" /></clipPath>
    </defs>
    <rect x="193" y="840" width="1439" height="150.500" fill="#1a1522" />
    <g stroke="#fff" strokeOpacity=".075" strokeWidth="1" shapeRendering="crispEdges">
      {GRID_X.map((x) => <path key={x} d={`M${x} 187V1064`} />)}
      {PRICES.map((p, i) => <path key={p} d={`M193 ${226.3 + i * 44.5}H1632`} />)}
      {LEVELS.map((l, i) => <path key={l} d={`M193 ${765 + i * 37.6}H1632`} />)}
    </g>
    <path d="M681 498C681 480 683 466 694 446C710 413 704 392 713 376Q717 366 722 362" fill="none" stroke="#213662" strokeWidth="24" strokeLinecap="round" strokeLinejoin="round" opacity=".9" />
    <path
      d="M645 953C627 952 616 965 609 985C603 1010 598 1030 608 1042C616 1054 630 1057 645 1056C668 1057 680 1045 692 1027C703 1008 710 990 702 976C694 966 670 966 652 957"
      fill="none" stroke="#213566" strokeWidth="24" strokeLinecap="round" strokeLinejoin="round" opacity=".9"
    />
    <g>
      {bars.map((b) => (
        <rect key={b.x} x={b.x - 0.6} y={749.5 - b.volume} width="1.300" height={b.volume} fill={b.up ? "#2f655b" : "#7a3a36"} />
      ))}
      {bars.map((b) => (
        <g key={b.x} fill={b.up ? UP : DOWN}>
          <rect x={b.x - 0.5} y={b.top} width="1" height={b.bottom - b.top} />
          <rect x={b.x - 1.2} y={Math.min(b.open, b.close)} width="2.400" height={Math.max(1, Math.abs(b.open - b.close))} />
        </g>
      ))}
    </g>
    <path d="M193 317.500H1632" stroke="#d85a50" strokeWidth="1" strokeDasharray="1.500 1.500" />
    <path d="M193 751.500H1632" stroke="#363636" />
    <path d={`${toPath(rsi)}L1632 840H193Z`} fill="url(#hot)" clipPath="url(#above)" />
    <path d={`${toPath(rsi)}L1632 990.500H193Z`} fill="url(#cold)" clipPath="url(#below)" />
    <g stroke="#85858a" strokeDasharray="7 6">
      <path d="M193 840H1632" />
      <path d="M193 915.500H1632" strokeOpacity=".6" />
      <path d="M193 990.500H1632" />
    </g>
    <path d={toPath(rsi)} fill="none" stroke="#7558b0" strokeWidth="1.400" />
    <path d={toPath(ma)} fill="none" stroke="#e8d06f" strokeWidth="1.500" strokeLinejoin="round" />
  </PlotSvg>
);

const Chart = () => (
  <ChartCard>
    <ChartGrid>
      <Plot />
      <Axis $pane="price">
        {PRICES.map((p) => <span key={p}>{p}</span>)}
        <Tag $top={120} $color="#dd4a4c" $solid $wide>99,748.16<Countdown>03:21:56</Countdown></Tag>
        <Tag $top={160} $color="#3f8573" $wide>95,323.12</Tag>
        <Tag $top={539} $color="#4d9f88">57</Tag>
      </Axis>
      <Axis $pane="level">
        {LEVELS.map((l) => <span key={l}>{l}</span>)}
        <Tag $top={118} $color="#7255ad">59.42</Tag>
        <Tag $top={138} $color="#e8d06f">57.82</Tag>
      </Axis>
      <TimeAxis>
        {DATES.map((d, i) => <DateCell key={i} $days={d ? 4 : 3} $strong={d.endsWith("월")}>{d}</DateCell>)}
      </TimeAxis>
      <AxisSettings aria-label="축 설정"><HexGlyph size={18} /></AxisSettings>
      <Legend>
        <LegendTitle>
          <svg width="22" height="22" viewBox="0 0 22 22" aria-hidden="true">
            <circle cx="11" cy="11" r="11" fill="#e8973b" />
            <g fill="none" stroke="#fff" strokeWidth="1.700">
              <path d="M8.500 6.500H12Q14.500 6.800 14 8.900Q13.500 10.700 11 10.700H8.200M11 10.700Q14 10.900 13.300 13.200Q12.700 15.300 10 15.300H6.500M9.500 6.500L7.500 15.300" />
              <path d="M11 4.500L10.500 6.500M13 4.800L12.600 6.600M8.600 15.500L8.100 17.500M10.700 15.500L10.200 17.500" strokeWidth="1.300" />
            </g>
          </svg>
          <SymbolName>비트코인 / 달러 · 4시간 · Binance</SymbolName>
          <MarketPill>
            <PillHalf $bg="#19291f"><MarketDot /></PillHalf>
            <PillHalf $bg="#2a1a30">
              <svg width="16" height="16" viewBox="0 0 16 16" aria-hidden="true">
                <path d="M3 8.500L12.500 3L12.500 13.500Z" fill="none" stroke="#a84fc0" strokeWidth="1.500" />
                <g fill="#a84fc0"><circle cx="3" cy="8.500" r="2.500" /><circle cx="12.500" cy="3" r="2.500" /><circle cx="12.500" cy="13.500" r="2.500" /></g>
              </svg>
            </PillHalf>
          </MarketPill>
        </LegendTitle>
        <Change>99,748.16 −1,526.26 (−1.51%)</Change>
        <OrderRow>
          <OrderButton $color="#dd4a4c"><OrderPrice>99,773.58</OrderPrice>셀</OrderButton>
          <span>0.00</span>
          <OrderButton $color="#3d63dd"><OrderPrice>99,773.58</OrderPrice>바이</OrderButton>
        </OrderRow>
        <Collapse aria-label="범례 접기">
          <Glyph viewBox="0 0 14 14" $size={14} $stroke={2}><path d="M1 4L7 10L13 4" /></Glyph>
        </Collapse>
      </Legend>
      <BrandMark href="#" aria-label="TradingView">
        <svg width="36" height="18" viewBox="0 4 36 18" fill="currentColor"><path d="M14 22H7V11H0V4h14v18zM28 22h-8l7.500-18h8L28 22z" /><circle cx="20" cy="8" r="4" /></svg>
      </BrandMark>
      <ScrollEnd aria-label="최근 봉으로 이동">
        <Glyph viewBox="0 0 16 16" $size={16} $stroke={1.6}><path d="M3 3L7 8L3 13M8 1.500L13.500 8L8 14.500" /></Glyph>
      </ScrollEnd>
    </ChartGrid>
    <RangeBar>
      {RANGES.map((r) => <button key={r}>{r}</button>)}
      <RangeRule />
      <button aria-label="날짜로 이동">
        <Glyph viewBox="0 0 26 26" $size={26}>
          <path d="M2.500 13V6.500Q2.500 4 5 4H21Q23.500 4 23.500 6.500V21Q23.500 23.500 21 23.500H13.500M2.500 9.500H23.500M8 1V6.500M18 1V6.500M1 19.500H9.500M6 15.500L10 19.500L6 23.500" />
        </Glyph>
      </button>
      <ZoneTime>21:38:03 UTC+9</ZoneTime>
    </RangeBar>
  </ChartCard>
);

/* ------------------------------------------------------------------ */
/* Browser navigation                                                  */
/* ------------------------------------------------------------------ */

const BottomNav = styled.nav`
  display: flex;
  flex: none;
  align-items: flex-start;
  justify-content: space-between;
  height: 97px;
  padding: 20px 27px;
  color: #f0f0f0;
`;

const ResizeGrip = styled.svg`
  position: absolute;
  right: 4px;
  bottom: 6px;
`;

const Browser = () => (
  <BrowserWindow>
    <TitleBar>
      <DotsPill $outlined aria-label="창 제어">
        <Dot $color="#d9796b" /><Dot $color="#e5b960" /><Dot $color="#82c065" />
      </DotsPill>
    </TitleBar>
    <AddressRow>
      <IconButton aria-label="탭 닫기">
        <Glyph viewBox="0 0 28 28" $size={26} $stroke={2.8}><path d="M4.500 4.500L23.500 23.500M23.500 4.500L4.500 23.500" /></Glyph>
      </IconButton>
      <AddressBar>
        <svg width="20" height="20" viewBox="0 0 20 20" aria-hidden="true">
          <rect x="3.500" y="8" width="13" height="10" rx="2" fill="#f0f0f0" />
          <path d="M6.500 8V6A3.500 3.500 0 0 1 13.500 6V8" fill="none" stroke="#f0f0f0" strokeWidth="2" />
        </svg>
        <Url href="#">kr.tradingview.com</Url>
        <IconButton aria-label="북마크">
          <Glyph viewBox="0 0 28 28" $stroke={2.2}><path d="M6.500 4H21.500V24L14 18.500L6.500 24Z" strokeLinejoin="round" /></Glyph>
        </IconButton>
        <IconButton $ml={25} aria-label="공유">
          <Glyph viewBox="0 0 28 28" $stroke={2.2}><path d="M9.500 9H5.500Q4 9 4 10.500V26Q4 27.500 5.500 27.500H22.500Q24 27.500 24 26V10.500Q24 9 22.500 9H18.500M14 19V1.500M9 6L14 1L19 6" /></Glyph>
        </IconButton>
      </AddressBar>
      <IconButton aria-label="더보기">
        <svg width="24" height="24" viewBox="0 0 24 24" fill="#f0f0f0"><circle cx="4" cy="12" r="2.500" /><circle cx="12" cy="12" r="2.500" /><circle cx="20" cy="12" r="2.500" /></svg>
      </IconButton>
    </AddressRow>
    <ChartToolbar />
    <Workspace>
      <DrawTools aria-label="드로잉 도구">
        {DRAW_TOOLS.map((tool, i) =>
          tool ? (
            <DrawButton key={i} $look={tool.look} aria-label={tool.label}><Glyph viewBox="0 0 28 28">{tool.art}</Glyph></DrawButton>
          ) : (
            <RailRule key={i} $width={43} $gap={4} />
          ),
        )}
      </DrawTools>
      <Center>
        <Chart />
        <PanelBar>
          <PanelTab>Pine 에디터</PanelTab>
          <PanelTab>트레이딩패널</PanelTab>
          <PanelActions>
            <button aria-label="패널 열기"><Glyph viewBox="0 0 24 24" $size={22}><path d="M1 17L12 7L23 17" /></Glyph></button>
            <button aria-label="패널 최대화"><FullscreenGlyph wide /></button>
          </PanelActions>
        </PanelBar>
      </Center>
      <SideRail aria-label="위젯">
        {RAIL_TOP.map((r) => <RailButton key={r.label} aria-label={r.label}><Glyph viewBox="0 0 32 32" $size={30}>{r.art}</Glyph></RailButton>)}
        {RAIL_BOTTOM.map((r, i) => (
          <RailButton key={r.label} $push={i === 0} aria-label={r.label}><Glyph viewBox="0 0 32 32" $size={32}>{r.art}</Glyph></RailButton>
        ))}
        <RailButton aria-label="앱"><AppsGrid /></RailButton>
        <RailRule $width={40} $gap={7} />
        <RailButton aria-label="도움말">
          <Glyph viewBox="0 0 32 32" $size={32}>
            <circle cx="16" cy="16" r="15.500" /><path d="M11 12Q11 7 16 7Q21 7 21 11.500Q21 14 18 16Q16 17.500 16 20" /><circle cx="16" cy="24" r="1.500" />
          </Glyph>
        </RailButton>
      </SideRail>
    </Workspace>
    <BottomNav>
      <IconButton aria-label="뒤로"><Glyph viewBox="0 0 28 28" $stroke={3}><path d="M20.500 2.500L8.500 14L20.500 25.500" /></Glyph></IconButton>
      <IconButton $dim aria-label="앞으로"><Glyph viewBox="0 0 28 28" $stroke={3}><path d="M8 2.500L20 14L8 25.500" /></Glyph></IconButton>
      <IconButton aria-label="홈">
        <Glyph viewBox="0 0 28 28" $stroke={2.3}><path d="M4.500 11.500L14 3.500L23.500 11.500V24.500H17.500V16H10.500V24.500H4.500Z" strokeLinejoin="round" /></Glyph>
      </IconButton>
      <IconButton aria-label="탭 2개">
        <Glyph viewBox="0 0 28 28" $stroke={2.3}>
          <rect x="3" y="3" width="22" height="22" rx="3.500" />
          <text x="14" y="18.500" textAnchor="middle" fontSize="13" fontWeight="600" stroke="none" fill="currentColor">2</text>
        </Glyph>
      </IconButton>
    </BottomNav>
    <ResizeGrip width="32" height="32" viewBox="0 0 32 32" aria-hidden="true">
      <path d="M28 6Q25 24 5 28" fill="none" stroke="#fff" strokeWidth="4" strokeLinecap="round" />
    </ResizeGrip>
  </BrowserWindow>
);

/* ------------------------------------------------------------------ */
/* Dock                                                                */
/* ------------------------------------------------------------------ */

const DockBar = styled.footer`
  position: absolute;
  z-index: 4;
  bottom: 10px;
  left: 50%;
  display: flex;
  align-items: center;
  gap: 23px;
  height: 128px;
  padding: 0 22px;
  border: 1px solid #77727f;
  border-radius: 48px;
  background: linear-gradient(90deg, #513f46 0, #443f4b 8%, #433e4a 50%, #4b4356 100%);
  transform: translateX(-50%);
`;

const AppIcon = styled.button<{ $bg: string }>`
  position: relative;
  display: flex;
  flex: none;
  align-items: center;
  justify-content: center;
  width: 82px;
  height: 82px;
  border-radius: 21px;
  background: ${(p) => p.$bg};
  box-shadow: inset 0 0 1px 1px rgba(255, 255, 255, 0.25);
`;

const Badge = styled.span`
  position: absolute;
  top: -13px;
  right: -13px;
  min-width: 31px;
  padding: 0 8px;
  border-radius: 16px;
  background: #eb4d47;
  color: #fff;
  font-size: 18px;
  line-height: 31px;
  text-align: center;
`;

const DockRule = styled.span`
  width: 1px;
  height: 84px;
  background: #6f6a77;
`;

const CalendarFace = styled(AppIcon)`
  flex-direction: column;
  color: #1c1c1c;
  font-size: 16px;
  font-weight: 500;
  line-height: 18px;
`;

const DayNumber = styled.span`
  font-size: 50px;
  font-weight: 300;
  line-height: 46px;
`;

const PHOTO_PETALS = ["#f39a36", "#f3c244", "#9cc94b", "#55ad7a", "#4c8fe0", "#8a6bd0", "#d668b8", "#ea5f62"];

const PetalLayer = styled.g`
  isolation: isolate;
  & > rect { mix-blend-mode: multiply; }
`;

const Photos = ({ size }: { size: number }) => (
  <svg width={size} height={size} viewBox="0 0 68 68" aria-hidden="true">
    <PetalLayer>
      {PHOTO_PETALS.map((color, i) => (
        <rect key={color} x="25" y="2" width="18" height="29" rx="9" fill={color} opacity=".9" transform={`rotate(${i * 45} 34 34)`} />
      ))}
    </PetalLayer>
    <circle cx="34" cy="34" r="4" fill="#fff" />
  </svg>
);

const Notes = ({ size }: { size: number }) => (
  <svg width={size} height={size} viewBox="0 0 82 82" aria-hidden="true">
    <defs>
      <clipPath id="sheet"><rect width="82" height="82" rx="21" /></clipPath>
      <linearGradient id="paper" x2="0" y2="1"><stop stopColor="#fff" /><stop offset="1" stopColor="#ebebeb" /></linearGradient>
      <linearGradient id="cap" x2="0" y2="1"><stop stopColor="#f9dc79" /><stop offset="1" stopColor="#f5c945" /></linearGradient>
    </defs>
    <g clipPath="url(#sheet)">
      <rect width="82" height="82" fill="url(#paper)" />
      <rect width="82" height="21" fill="url(#cap)" />
      <path d="M3 23.500H80" stroke="#c5ad72" strokeWidth="1.600" strokeDasharray="1.600 2.400" />
      <path d="M11 41.500H71M11 61.500H71" stroke="#bdbdbd" strokeWidth="1.500" />
    </g>
  </svg>
);

const BraveLion = () => (
  <svg width="60" height="72" viewBox="0 0 60 72" aria-hidden="true">
    <path d="M20 0H41L47 6Q54 5 58 9L60 15L58 19L60 26L53 54Q52 57 48 60L30 72L12 60Q8 57 7 54L0 26L2 19L0 15L2 9Q6 5 13 6Z" fill="#ee4323" />
    <path d="M30 15Q36 15 41 13.500L49 16.500L54 24Q53 29 48 33.500Q50 39 47 43Q43 47 40 44.500L30 38L20 44.500Q17 47 13 43Q10 39 12 33.500Q7 29 6 24L11 16.500L19 13.500Q24 15 30 15Z" fill="#fff" />
    <path d="M14 20Q21 19 26 22.500L25 31L30 35.500L35 31L34 22.500Q39 19 46 20" fill="none" stroke="#ee4323" strokeWidth="2.600" strokeLinejoin="round" />
    <path d="M30 34V40" stroke="#ee4323" strokeWidth="2.600" />
    <path d="M30 45.500L39.500 50.500L30 57.500L20.500 50.500Z" fill="#fff" stroke="#fff" strokeLinejoin="round" />
  </svg>
);

const FolderWrap = styled.button`
  position: relative;
  display: grid;
  grid-template-columns: repeat(2, 27px);
  place-content: center;
  gap: 6px;
  width: 82px;
  height: 82px;
  margin-left: 1px;
  border: 1px solid #b0a9bd;
  border-radius: 21px;
  background: #877f95;
`;

const FolderEdge = styled.svg`
  position: absolute;
  top: 6px;
  left: -13px;
`;

const MiniIcon = styled.span<{ $bg: string }>`
  display: flex;
  align-items: center;
  justify-content: center;
  width: 27px;
  height: 27px;
  border-radius: 7px;
  background: ${(p) => p.$bg};
  color: #111;
  overflow: hidden;
`;

const WHITE = "linear-gradient(#fff, #ececec)";

const Dock = () => (
  <DockBar>
    <AppIcon $bg="linear-gradient(#84ef7c, #59bb4d)" aria-label="메시지">
      <svg width="62" height="62" viewBox="0 0 62 62" aria-hidden="true">
        <defs><linearGradient id="bubble" x2="0" y2="1"><stop stopColor="#fff" /><stop offset="1" stopColor="#b8e5b3" /></linearGradient></defs>
        <path d="M31 6C48 6 60 17 60 31C60 45 48 55.500 31 55.500C26 55.500 21 54.500 17 52.500C14 54.500 9 56 5 55.500C8 53 9.500 50 9.500 47C4 43 2 37 2 31C2 17 14 6 31 6Z" fill="url(#bubble)" />
      </svg>
      <Badge>257</Badge>
    </AppIcon>
    <AppIcon $bg={WHITE} aria-label="Brave"><BraveLion /></AppIcon>
    <AppIcon $bg="#101010" aria-label="Spotify"><SiSpotify size={64} color="#57c465" /></AppIcon>
    <AppIcon $bg="#fff" aria-label="Gmail">
      <svg width="64" height="48" viewBox="0 0 64 48" aria-hidden="true">
        <path d="M0 8V43Q0 47 4 47H15V17Z" fill="#4f86ec" />
        <path d="M64 8V43Q64 47 60 47H49V17Z" fill="#5aa65c" />
        <path d="M49 8V22L64 12V7Q64 0 57 0Q54 0 49 4Z" fill="#f0c03d" />
        <path d="M15 22V6L32 19L49 6V22L32 35Z" fill="#d85040" />
        <path d="M15 22V6L10 2Q7 0 5 .500Q0 2 0 7V12Z" fill="#b5342d" />
      </svg>
      <Badge>146</Badge>
    </AppIcon>
    <CalendarFace $bg={WHITE}>금요일<DayNumber>7</DayNumber></CalendarFace>
    <AppIcon $bg={WHITE} aria-label="사진"><Photos size={68} /></AppIcon>
    <AppIcon $bg={WHITE} aria-label="메모"><Notes size={82} /></AppIcon>
    <DockRule />
    <AppIcon $bg="#fff" aria-label="Google"><FcGoogle size={58} /><Badge>2</Badge></AppIcon>
    <AppIcon $bg="#f6e34b" aria-label="카카오톡">
      <svg width="64" height="60" viewBox="0 0 64 60" aria-hidden="true">
        <path d="M32 2C50 2 63 12 63 26C63 40 50 50 32 50C30 50 28 50 26 49.500L14 59Q12 60 12.500 57.500L14.500 46C6 42 1 35 1 26C1 12 14 2 32 2Z" fill="#371d1d" />
        <text x="32" y="33" textAnchor="middle" fontSize="18" fontWeight="700" fill="#f6e34b" fontFamily="Inter, sans-serif">TALK</text>
      </svg>
      <Badge>458</Badge>
    </AppIcon>
    <AppIcon $bg="radial-gradient(circle at 35% 105%, #fbd546 0, #f6a53c 20%, #ee4f36 38%, rgba(226, 48, 142, 0.9) 62%, rgba(214, 50, 190, 0) 92%), linear-gradient(100deg, #5a2ff5 0, #b732d8 45%, #dc35b0 100%)" aria-label="Instagram">
      <svg width="62" height="62" viewBox="0 0 62 62" fill="none" stroke="#fff" strokeWidth="5" aria-hidden="true">
        <rect x="4" y="4" width="54" height="54" rx="15" /><circle cx="31" cy="31" r="13" /><circle cx="47" cy="16" r="3.500" fill="#fff" stroke="none" />
      </svg>
      <Badge>11</Badge>
    </AppIcon>
    <DockRule />
    <FolderWrap aria-label="앱 보관함">
      <FolderEdge width="20" height="72" viewBox="0 0 20 72" fill="none" stroke="#a49cb0" aria-hidden="true">
        <path d="M13 2Q7 8 7 19V50Q7 62 13 68M9 4Q2 11 2 21V48Q2 60 9 66" />
      </FolderEdge>
      <MiniIcon $bg="#fff"><Notes size={27} /></MiniIcon>
      <MiniIcon $bg="#f7f7f7"><SiOpenai size={20} /></MiniIcon>
      <MiniIcon $bg="#fff"><Photos size={23} /></MiniIcon>
      <MiniIcon $bg="linear-gradient(#4fb2f5, #2f78e8)">
        <svg width="19" height="19" viewBox="0 0 19 19" stroke="#fff" strokeWidth="1.800" strokeLinecap="round" aria-hidden="true">
          <path d="M10.500 2.500L4.500 13M8.500 2.500L15 14.500M1.500 12H10.500M13.500 12H17.500M3.500 14.500L3 15.500" />
        </svg>
      </MiniIcon>
    </FolderWrap>
  </DockBar>
);

/* ------------------------------------------------------------------ */
/* Page                                                                */
/* ------------------------------------------------------------------ */

export default function App() {
  return (
    <>
      <GlobalStyle />
      <Desktop>
        <Wallpaper />
        <NotesApp />
        <StatusBar>
          <DotsPill aria-label="멀티태스킹">
            <Dot $small $color="#a8a8a8" /><Dot $small $color="#a8a8a8" /><Dot $small $color="#a8a8a8" />
          </DotsPill>
          <Clock>21:38</Clock>
          <StatusIcons>
            <FaWifi size={17} aria-label="Wi-Fi" />
            <svg width="16" height="16" viewBox="0 0 16 16" aria-label="화면 방향 고정">
              <path d="M13.500 11.500A6.500 6.500 0 1 1 14 5.500" fill="none" stroke="#fff" strokeWidth="1.500" />
              <path d="M11.500 5.500H16L14.500 9Z" fill="#fff" />
              <rect x="5" y="7" width="6" height="4.500" rx="1" fill="#fff" />
              <path d="M6.300 7V5.800A1.700 1.700 0 0 1 9.700 5.800V7" fill="none" stroke="#fff" />
            </svg>
            <span>70%</span>
            <Battery />
          </StatusIcons>
        </StatusBar>
        <Browser />
        <Dock />
      </Desktop>
    </>
  );
}
